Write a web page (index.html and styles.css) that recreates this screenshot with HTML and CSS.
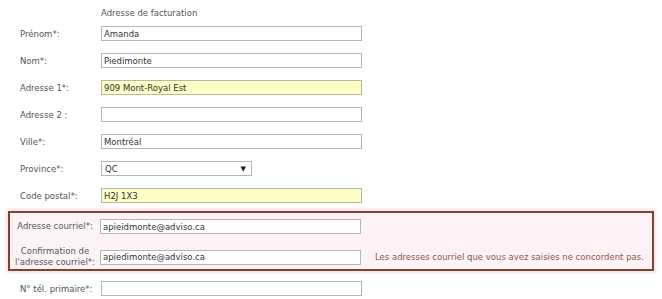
FILE: index.html
```html
<!DOCTYPE html>
<html lang="fr">
<head>
    <meta charset="UTF-8">
    <title>Adresse de facturation</title>
    <link rel="stylesheet" href="styles.css">
</head>
<body>
    <form class="form">
        <div class="heading">Adresse de facturation</div>
        <div class="row">
            <label>Prénom*:</label>
            <input class="field" value="Amanda">
        </div>
        <div class="row">
            <label>Nom*:</label>
            <input class="field" value="Piedimonte">
        </div>
        <div class="row">
            <label>Adresse 1*:</label>
            <input class="field auto" value="909 Mont-Royal Est">
        </div>
        <div class="row">
            <label>Adresse 2 :</label>
            <input class="field" value="">
        </div>
        <div class="row">
            <label>Ville*:</label>
            <input class="field" value="Montréal">
        </div>
        <div class="row">
            <label>Province*:</label>
            <div class="select">QC<span class="arrow">▼</span></div>
        </div>
        <div class="row">
            <label>Code postal*:</label>
            <input class="field auto" value="H2J 1X3">
        </div>
        <div class="error-box">
            <div class="row">
                <label>Adresse courriel*:</label>
                <input class="field" value="apieidmonte@adviso.ca">
            </div>
            <div class="row">
                <label>Confirmation de<br>l'adresse courriel*:</label>
                <input class="field" value="apiedimonte@adviso.ca">
                <span class="error-msg">Les adresses courriel que vous avez saisies ne concordent pas.</span>
            </div>
        </div>
        <div class="row">
            <label>N° tél. primaire*:</label>
            <input class="field" value="">
        </div>
    </form>
</body>
</html>
```

FILE: styles.css
```css
body {
  margin: 0;
  background: #fff;
  font-family: "DejaVu Sans", Verdana, sans-serif;
  font-size: 8.5px;
  color: #555;
}
.form {
  padding: 8px 0 0 8px;
}
.heading {
  margin-left: 93px;
  height: 18px;
  color: #555;
}
.row {
  display: grid;
  grid-template-columns: 93px 261px auto;
  align-items: center;
  height: 15px;
  margin-bottom: 12px;
}
.row label {
  padding-left: 12px;
  color: #555;
  white-space: nowrap;
}
.field {
  box-sizing: border-box;
  width: 261px;
  height: 15px;
  margin: 0;
  padding: 0 2px;
  border: 1px solid #b5b5b5;
  background: #fff;
  font: inherit;
  color: #333;
  outline: none;
}
.field.auto {
  background: #fdfdc6;
  border-color: #b8b8a0;
}
.select {
  box-sizing: border-box;
  width: 151px;
  height: 15px;
  border: 1px solid #b5b5b5;
  padding: 0 3px;
  display: flex;
  align-items: center;
  justify-content: space-between;
  color: #333;
}
.select .arrow {
  font-size: 7px;
  color: #222;
  margin-right: 2px;
}
.error-box {
  box-sizing: border-box;
  width: 646px;
  margin: -4px 0 10px;
  padding: 6px 0 8px;
  border: 2px solid #7d4529;
  background: #fdf3f7;
  box-shadow: 0 0 3px 2px #fbe1ec;
}
.error-box .row {
  grid-template-columns: 90px 261px auto;
}
.error-box .row:last-child {
  margin-bottom: 0;
}
.error-box label {
  padding-left: 0;
  text-align: center;
  line-height: 11px;
}
.error-msg {
  padding-left: 14px;
  color: #8a5a3c;
  white-space: nowrap;
}
```
